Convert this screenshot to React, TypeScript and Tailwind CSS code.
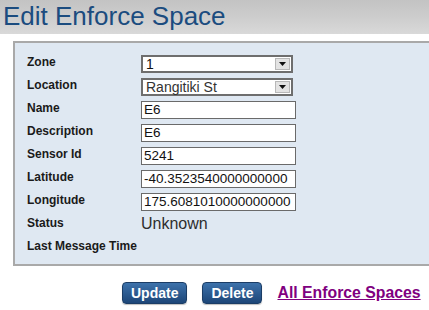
import React from "react";

const font = { fontFamily: '"Liberation Sans", Arial, sans-serif' };

function Select({ value, color }: { value: string; color: string }) {
  return (
    <div className="flex h-[18px] w-[152px] items-stretch border-2 border-[#6e6e6e] bg-white">
      <div className={`flex-1 pl-[3px] text-[14px] leading-[14px] ${color}`}>{value}</div>
      <div className="my-[1px] mr-[1px] flex w-[15px] items-center justify-center border border-[#b8b8b8] bg-[#e3e3e3]">
        <svg width="7" height="4" viewBox="0 0 7 4">
          <polygon points="0,0 7,0 3.5,4" fill="#111" />
        </svg>
      </div>
    </div>
  );
}

function Input({ value }: { value: string }) {
  return (
    <div className="h-[18px] w-[155px] overflow-hidden whitespace-nowrap border border-[#6a6a6a] bg-white pl-[2px] text-[13.5px] leading-[16px] text-[#111]">
      {value}
    </div>
  );
}

function Row({ label, children }: { label: string; children?: React.ReactNode }) {
  return (
    <div className="flex h-[23px] items-start">
      <div className="w-[114px] text-[12px] font-bold leading-[14px] text-[#1a1a1a]">{label}</div>
      <div>{children}</div>
    </div>
  );
}

function Btn({ children }: { children: React.ReactNode }) {
  return (
    <div className="flex h-[22px] items-center rounded-[4px] border border-[#1b3d66] bg-gradient-to-b from-[#3d72ab] to-[#1d4678] px-[8px] text-[14px] font-bold leading-[16px] text-white shadow-[0_1px_1px_rgba(0,0,0,0.25)]">
      {children}
    </div>
  );
}

export default function App() {
  return (
    <div className="h-[310px] w-[429px] overflow-hidden bg-white" style={font}>
      <div className="h-[34px] bg-gradient-to-b from-[#c3c3c3] via-[#cdcdcd] to-[#d9d9d9] pl-[3px] pt-[1px]">
        <div className="text-[26px] leading-[30px] text-[#1b4c7f]">Edit Enforce Space</div>
      </div>
      <div className="ml-[13px] mt-[7px] h-[225px] border-y-2 border-l-2 border-[#a9a9a9] bg-[#dfe8f2] pl-[12px] pt-[12px]">
        <Row label="Zone">
          <Select value="1" color="text-[#111]" />
        </Row>
        <Row label="Location">
          <Select value="Rangitiki St" color="text-[#333]" />
        </Row>
        <Row label="Name">
          <Input value="E6" />
        </Row>
        <Row label="Description">
          <Input value="E6" />
        </Row>
        <Row label="Sensor Id">
          <Input value="5241" />
        </Row>
        <Row label="Latitude">
          <Input value="-40.3523540000000000" />
        </Row>
        <Row label="Longitude">
          <Input value="175.6081010000000000" />
        </Row>
        <Row label="Status">
          <div className="-mt-[1px] text-[16px] leading-[18px] text-[#2e2e2e]">Unknown</div>
        </Row>
        <Row label="Last Message Time" />
      </div>
      <div className="flex items-center gap-[15px] pl-[122px] pt-[16px]">
        <Btn>Update</Btn>
        <Btn>Delete</Btn>
        <a className="text-[15.8px] font-bold leading-[18px] text-[#800080] underline" href="#">
          All Enforce Spaces
        </a>
      </div>
    </div>
  );
}
